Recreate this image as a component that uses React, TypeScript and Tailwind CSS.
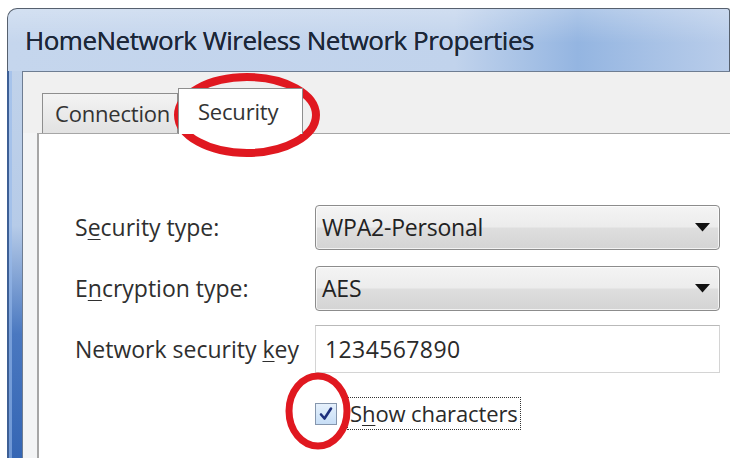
import React from "react";

function Underlined({ before, key_, after }: { before: string; key_: string; after: string }) {
  return (
    <span>
      {before}
      <span className="underline decoration-1 underline-offset-[3px]">{key_}</span>
      {after}
    </span>
  );
}

function Combo({ value }: { value: string }) {
  return (
    <div className="h-[45px] w-[405px] rounded-[4px] border border-[#8c8c8c] bg-[linear-gradient(180deg,#f4f4f4_0%,#ececec_48%,#dedede_52%,#d4d4d4_100%)] shadow-[inset_0_0_0_1px_rgba(255,255,255,0.7)] flex items-center pl-[6px] pr-[8px]">
      <span className="flex-1 text-[23px] tracking-[-0.2px] text-[#222]">{value}</span>
      <svg width="15" height="9" viewBox="0 0 15 9" className="mr-[1px]">
        <path d="M0 0 H15 L7.5 8.5 Z" fill="#111" />
      </svg>
    </div>
  );
}

export default function App() {
  const label = "text-[23px] text-[#2f2f2f] w-[240px] shrink-0";
  return (
    <div className="relative w-[734px] h-[462px] bg-white overflow-hidden font-['Open_Sans','Noto_Sans',sans-serif]">
      <div className="ml-[7px] mt-[8px] w-[723px] h-[450px] flex flex-col">
        {/* caption */}
        <div className="h-[63px] shrink-0 rounded-tl-[10px] rounded-tr-[3px] border border-b-0 border-[#56606e] bg-[linear-gradient(180deg,rgba(255,255,255,0.25),rgba(255,255,255,0)_55%),linear-gradient(90deg,#c5d6ed_0%,#c1d3ec_62%,#94b5e1_79%,#a8c2e6_90%,#b9cdea_100%)] flex items-center pl-[17px]">
          <span className="text-[26px] tracking-[-0.5px] text-[#1c2738] [text-shadow:0_0_0.4px_#1c2738]">
            HomeNetwork Wireless Network Properties
          </span>
        </div>
        <div className="flex flex-1 min-h-0">
          {/* left frame */}
          <div className="w-[15px] shrink-0 border-l-2 border-[#3d5f95] bg-[linear-gradient(180deg,#c0d2ea_0%,#b6cbe8_40%,#4a78c0_68%,#3566b4_100%)] shadow-[inset_3px_0_0_rgba(150,185,235,0.6)]" />
          <div className="flex-1 flex flex-col border-l border-t border-[#6e7d92] bg-[#f0f0f0]">
            {/* tab strip */}
            <div className="h-[61px] shrink-0 flex items-end pl-[19px]">
              <div className="h-[40px] w-[136px] border border-b-0 border-[#8e8e8e] bg-[linear-gradient(180deg,#f3f3f3,#e2e2e2)] flex items-center pl-[12px] text-[22px] tracking-[-0.2px] text-[#333]">
                Connection
              </div>
              <div className="relative z-10 -mb-px h-[46px] w-[125px] border border-b-0 border-[#8e8e8e] bg-white flex items-center pl-[19px] text-[22px] tracking-[-0.2px] text-[#333]">
                Security
              </div>
            </div>
            {/* page */}
            <div className="flex flex-1 min-h-0">
              <div className="w-[14px] shrink-0 bg-[#f3f4f5]" />
              <div className="flex-1 border-l-2 border-t border-[#a6a6a6] bg-white pl-[36px] pt-[71px] flex flex-col">
                <div className="flex items-center">
                  <div className={label}>
                    <Underlined before="S" key_="e" after="curity type:" />
                  </div>
                  <Combo value="WPA2-Personal" />
                </div>
                <div className="flex items-center mt-[16px]">
                  <div className={label}>
                    <Underlined before="E" key_="n" after="cryption type:" />
                  </div>
                  <Combo value="AES" />
                </div>
                <div className="flex items-center mt-[14px]">
                  <div className={label}>
                    <Underlined before="Network security " key_="k" after="ey" />
                  </div>
                  <div className="h-[48px] w-[405px] border border-[#d4d4d4] border-t-[#b9b9b9] bg-white flex items-center pl-[9px] text-[23px] tracking-[0.4px] text-[#2a2a2a]">
                    1234567890
                  </div>
                </div>
                <div className="flex items-center mt-[24px] pl-[240px]">
                  <div className="w-[22px] h-[22px] border border-[#8596ad] bg-[linear-gradient(180deg,#e6f1fc,#c7def6)] flex items-center justify-center shrink-0">
                    <svg width="16" height="16" viewBox="0 0 16 16">
                      <path d="M3 8.5 L6.5 12.5 L13 2.5" fill="none" stroke="#1d2f7c" strokeWidth="2.6" strokeLinejoin="round" strokeLinecap="round" />
                    </svg>
                  </div>
                  <div className="ml-[10px] h-[33px] border border-dotted border-[#333] flex items-center px-[2px] text-[22px] tracking-[-0.1px] text-[#2a2a2a]">
                    <Underlined before="S" key_="h" after="ow characters" />
                  </div>
                </div>
              </div>
            </div>
          </div>
        </div>
      </div>

      {/* red annotation rings */}
      <svg className="absolute left-0 top-0 pointer-events-none" width="734" height="462">
        <ellipse cx="247" cy="115" rx="69" ry="38" fill="none" stroke="#e01820" strokeWidth="8" />
        <ellipse cx="318" cy="411" rx="29" ry="35" fill="none" stroke="#e01820" strokeWidth="7" />
      </svg>
    </div>
  );
}
